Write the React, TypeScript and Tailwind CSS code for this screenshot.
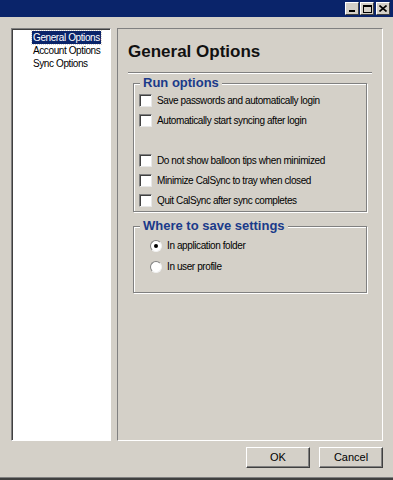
import React from "react";

const Check = ({ label }: { label: string }) => (
  <div className="flex items-center h-[20px]">
    <div className="w-[13px] h-[13px] bg-white border border-t-[#808080] border-l-[#808080] border-b-[#e8e8e8] border-r-[#e8e8e8] shadow-[inset_1px_1px_0_#404040]" />
    <span className="ml-[5px]">{label}</span>
  </div>
);

const Radio = ({ label, checked }: { label: string; checked?: boolean }) => (
  <div className="flex items-center h-[21px]">
    <div className="w-[12px] h-[12px] rounded-full bg-white border border-t-[#808080] border-l-[#808080] border-b-[#f0f0f0] border-r-[#f0f0f0] flex items-center justify-center">
      {checked && <div className="w-[4px] h-[4px] rounded-full bg-black" />}
    </div>
    <span className="ml-[5px]">{label}</span>
  </div>
);

export default function App() {
  return (
    <div className="w-[393px] h-[480px] bg-[#d4d0c8] relative overflow-hidden text-[10px] tracking-[-0.4px] text-black whitespace-nowrap" style={{ fontFamily: '"Liberation Sans", Arial, sans-serif' }}>
      <div className="h-[17px] bg-[#0a246a] flex items-center justify-end pr-[3px] gap-0">
        <div className="flex">
          <div className="w-[14px] h-[13px] bg-[#d4d0c8] border border-t-white border-l-white border-b-[#404040] border-r-[#404040] flex items-end justify-center pb-[2px] mr-[1px]">
            <div className="w-[6px] h-[2px] bg-black" />
          </div>
          <div className="w-[14px] h-[13px] bg-[#d4d0c8] border border-t-white border-l-white border-b-[#404040] border-r-[#404040] flex items-center justify-center mr-[2px]">
            <div className="w-[9px] h-[8px] border border-black border-t-2" />
          </div>
          <div className="w-[14px] h-[13px] bg-[#d4d0c8] border border-t-white border-l-white border-b-[#404040] border-r-[#404040] flex items-center justify-center">
            <svg width="8" height="7" viewBox="0 0 8 7">
              <path d="M0.5 0.5 L7.5 6.5 M7.5 0.5 L0.5 6.5" stroke="black" strokeWidth="1.6" />
            </svg>
          </div>
        </div>
      </div>
      <div className="flex pt-[11px] pl-[11px]">
        <div className="w-[100px] h-[413px] bg-white border border-t-[#808080] border-l-[#808080] border-b-white border-r-white shadow-[inset_1px_1px_0_#404040] pl-[20px] pt-[2px] leading-[13px]">
          <div className="bg-[#0a246a] text-white inline-block px-[1px] outline-1 outline-dotted outline-[#d4d0c8]">General Options</div>
          <div className="px-[1px]">Account Options</div>
          <div className="px-[1px]">Sync Options</div>
        </div>
        <div className="ml-[6px] w-[266px] h-[413px] border border-t-[#808080] border-l-[#808080] border-b-[#ffffff] border-r-[#ffffff] px-[10px] pt-[13px]">
          <div className="font-bold text-[17px] leading-[20px] tracking-normal text-[#111]">General Options</div>
          <div className="mt-[10px] h-[2px] border-t border-[#808080] border-b border-b-white mr-[0px]" />
          <div className="mt-[9px] mx-[5px] relative border border-[#808080] shadow-[1px_1px_0_white,inset_1px_1px_0_white] pt-[6px] pl-[5px] pb-[1px]">
            <div className="absolute -top-[9px] left-[6px] bg-[#d4d0c8] px-[3px] font-bold text-[13px] leading-[16px] tracking-normal text-[#1a3a8a]">Run options</div>
            <Check label="Save passwords and automatically login" />
            <Check label="Automatically start syncing after login" />
            <div className="h-[20px]" />
            <Check label="Do not show balloon tips when minimized" />
            <Check label="Minimize CalSync to tray when closed" />
            <Check label="Quit CalSync after sync completes" />
          </div>
          <div className="mt-[14px] mx-[5px] relative border border-[#808080] shadow-[1px_1px_0_white,inset_1px_1px_0_white] h-[67px] pt-[8px] pl-[16px]">
            <div className="absolute -top-[9px] left-[6px] bg-[#d4d0c8] px-[3px] font-bold text-[13px] leading-[16px] tracking-normal text-[#1a3a8a]">Where to save settings</div>
            <Radio label="In application folder" checked />
            <Radio label="In user profile" />
          </div>
        </div>
      </div>
      <div className="flex justify-end gap-[9px] pr-[10px] mt-[6px]">
        <div className="w-[64px] h-[21px] border border-t-white border-l-white border-b-[#404040] border-r-[#404040] shadow-[inset_-1px_-1px_0_#808080] flex items-center justify-center text-[11px] tracking-normal">OK</div>
        <div className="w-[64px] h-[21px] border border-t-white border-l-white border-b-[#404040] border-r-[#404040] shadow-[inset_-1px_-1px_0_#808080] flex items-center justify-center text-[11px] tracking-normal">Cancel</div>
      </div>
      <div className="absolute left-0 right-0 top-[477px] h-[1px] bg-[#808080]" />
      <div className="absolute left-0 right-0 top-[478px] h-[2px] bg-[#404040]" />
    </div>
  );
}
